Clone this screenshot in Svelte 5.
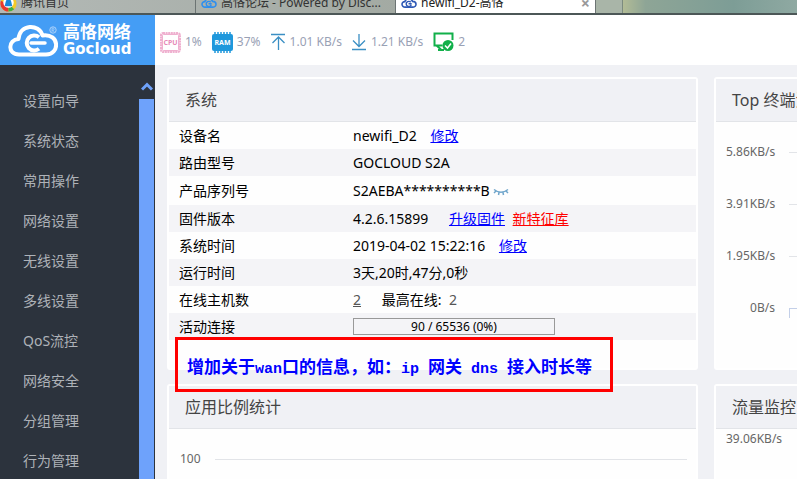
<script lang="ts">
    const menu = [
        "设置向导",
        "系统状态",
        "常用操作",
        "网络设置",
        "无线设置",
        "多线设置",
        "QoS流控",
        "网络安全",
        "分组管理",
        "行为管理",
    ];

    const speedTicks = ["5.86KB/s", "3.91KB/s", "1.95KB/s", "0B/s"];

    const connections = { used: 90, max: 65536 };
    const percent = Math.round((connections.used / connections.max) * 100);
</script>

{#snippet cloud()}
    <svg class="tab-icon" viewBox="0 0 18 12" aria-hidden="true">
        <path
            d="M5 10.6C0 11 0 4.500 4.300 4.500C5.500 .4 11.500 .4 13 4.200C18.200 4.200 18 10.600 13.500 10.600Z"
            fill="none"
            stroke="currentColor"
            stroke-width="1.800"
        />
        <path
            d="M11 5.200A2.900 2.900 0 1 0 11.500 8M8.500 6.800H12"
            fill="none"
            stroke="currentColor"
            stroke-width="1.600"
        />
    </svg>
{/snippet}

<div class="page">
    <div class="tabs">
        <div class="tab first">
            <svg class="qq-icon" viewBox="0 0 18 18" aria-hidden="true">
                <circle cx="9" cy="9" r="8.500" fill="#f3c928" />
                <path d="M1 6a8.500 8.500 0 0 0 8 11.500V10Z" fill="#e8392c" />
                <path d="M9 17.500a8.500 8.500 0 0 0 6-2.500L9 9Z" fill="#3fae49" />
                <circle cx="9" cy="8" r="5.500" fill="#fff" />
                <path d="M9 4c3 0 3 4 4 8H5c1-4 1-8 4-8Z" fill="#1787d8" />
            </svg>
            <span>腾讯首页</span>
        </div>
        <div class="tab forum">
            {@render cloud()}
            <span>高恪论坛 - Powered by Disc...</span>
        </div>
        <div class="tab active">
            {@render cloud()}
            <span>newifi_D2-高恪</span>
            <button class="close" aria-label="关闭">×</button>
        </div>
        <button class="new-tab" aria-label="新标签页"></button>
    </div>

    <div class="body">
        <aside>
            <a class="logo" href="#home">
                <svg viewBox="0 0 50 36" aria-hidden="true">
                    <path
                        d="M11 32.500C-1 32.500 0 17.500 10.500 17C12 1.500 31 1.500 34.500 13.500C52 11 52 32.500 38 32.500Z"
                        fill="none"
                        stroke="#fff"
                        stroke-width="4"
                        stroke-linejoin="round"
                    />
                    <path
                        d="M31 15.200A7.500 7.500 0 1 0 31 26.800"
                        fill="none"
                        stroke="#fff"
                        stroke-width="4"
                    />
                    <path d="M23 21H37" stroke="#fff" stroke-width="3.500" stroke-linecap="round" />
                    <circle cx="45" cy="8" r="3.200" fill="none" stroke="#b5d7fa" stroke-width=".9" />
                    <path
                        d="M44 10V6.200H45.200A1 1 0 0 1 45.200 8.200H44M45 8.200L46.200 10"
                        fill="none"
                        stroke="#b5d7fa"
                        stroke-width=".7"
                    />
                </svg>
                <span class="brand">
                    <span class="brand-cn">高恪网络</span>
                    <span class="brand-en">Gocloud</span>
                </span>
            </a>
            <div class="menu">
                <nav>
                    {#each menu as item}
                        <a href="#menu">{item}</a>
                    {/each}
                </nav>
                <div class="scrollbar">
                    <svg viewBox="0 0 12 10" aria-hidden="true">
                        <path d="M1 8.500L6 3.500L11 8.500" fill="none" stroke="#6ea2fb" stroke-width="3" />
                    </svg>
                    <div class="thumb"></div>
                </div>
            </div>
        </aside>

        <main>
            <header>
                <div class="stat">
                    <svg class="chip" viewBox="0 0 21 21" aria-hidden="true">
                        <rect x="1" y="1" width="19" height="19" rx="2" fill="#fbe6f0" stroke="#efb0cf" stroke-width="2" stroke-dasharray="2 .6" />
                        <rect x="2.500" y="2.500" width="16" height="16" rx="1" fill="#fff" stroke="#efb0cf" />
                        <text x="10.500" y="13" text-anchor="middle" fill="#e78ab8">CPU</text>
                    </svg>
                    <span>1%</span>
                </div>
                <div class="stat">
                    <svg class="chip" viewBox="0 0 21 21" aria-hidden="true">
                        <path
                            d="M3 0V21M6 0V21M9 0V21M12 0V21M15 0V21M18 0V21"
                            stroke="#1f98dc"
                            stroke-width="1.500"
                        />
                        <rect y="2" width="21" height="17" rx="2" fill="#1f98dc" />
                        <text x="10.500" y="13" text-anchor="middle" fill="#fff">RAM</text>
                    </svg>
                    <span>37%</span>
                </div>
                <div class="stat">
                    <svg class="arrow" viewBox="0 0 15 18" aria-hidden="true">
                        <path d="M0 1.500H14M7.500 17V4M1.500 10L7.500 4L13.500 10" />
                    </svg>
                    <span>1.01 KB/s</span>
                </div>
                <div class="stat">
                    <svg class="arrow" viewBox="0 0 15 18" aria-hidden="true">
                        <path d="M0 16.500H14M7 1V13M1 7.500L7 13.500L13 7.500" />
                    </svg>
                    <span>1.21 KB/s</span>
                </div>
                <div class="stat">
                    <svg class="host" viewBox="0 0 21 20" aria-hidden="true">
                        <path
                            d="M9.500 13.500H1.500V1.500H19.500V8M3.500 13.500L8 17.500M5 18H11"
                            fill="none"
                            stroke="#12b04a"
                            stroke-width="2"
                        />
                        <circle cx="15" cy="13.500" r="5.500" fill="#12b04a" />
                        <path d="M12 13.500L14.500 16L18 11.500" fill="none" stroke="#fff" stroke-width="1.500" />
                    </svg>
                    <span>2</span>
                </div>
            </header>

            <div class="grid">
                <section class="card system">
                    <h2>系统</h2>
                    <table>
                        <tbody>
                            <tr>
                                <th>设备名</th>
                                <td>newifi_D2 <a class="near" href="#name">修改</a></td>
                            </tr>
                            <tr>
                                <th>路由型号</th>
                                <td>GOCLOUD S2A</td>
                            </tr>
                            <tr class="serial">
                                <th>产品序列号</th>
                                <td>
                                    S2AEBA**********B
                                    <button class="eye" aria-label="显示">
                                        <svg viewBox="0 0 16 8" aria-hidden="true">
                                            <path
                                                d="M1 1.500Q8 7 15 1.500M3 3L1 5M6 4.500L5.500 7M10 4.500L10.500 7M13 3L15 5"
                                                fill="none"
                                                stroke="#6fa5cb"
                                                stroke-width="1.500"
                                            />
                                        </svg>
                                    </button>
                                </td>
                            </tr>
                            <tr>
                                <th>固件版本</th>
                                <td>
                                    4.2.6.15899
                                    <a class="far" href="#upgrade">升级固件</a>
                                    <a class="red" href="#feature">新特征库</a>
                                </td>
                            </tr>
                            <tr>
                                <th>系统时间</th>
                                <td>2019-04-02 15:22:16 <a class="near" href="#time">修改</a></td>
                            </tr>
                            <tr>
                                <th>运行时间</th>
                                <td>3天,20时,47分,0秒</td>
                            </tr>
                            <tr>
                                <th>在线主机数</th>
                                <td>
                                    <a class="count" href="#hosts">2</a>
                                    <span class="far">最高在线:</span>
                                    <span class="muted">2</span>
                                </td>
                            </tr>
                            <tr>
                                <th>活动连接</th>
                                <td>
                                    <div class="meter">
                                        {connections.used} / {connections.max} ({percent}%)
                                    </div>
                                </td>
                            </tr>
                        </tbody>
                    </table>
                    <p class="note">
                        增加关于<span>wan</span>口的信息，如：<span>{"ip "}</span>网关<span>{" dns "}</span>接入时长等
                    </p>
                </section>

                <section class="card">
                    <h2>Top 终端流量</h2>
                    <div class="chart top">
                        {#each speedTicks as tick}
                            <div class="tick"><span>{tick}</span><i></i></div>
                        {/each}
                    </div>
                </section>

                <section class="card">
                    <h2>应用比例统计</h2>
                    <div class="chart apps">
                        <div class="tick"><span>100</span><i></i></div>
                    </div>
                </section>

                <section class="card">
                    <h2>流量监控</h2>
                    <div class="chart flow">39.06KB/s</div>
                </section>
            </div>
        </main>
    </div>
</div>

<style>
    :global(body) {
        margin: 0;
        background: #f0f1f5;
    }

    .page {
        display: flex;
        flex-direction: column;
        height: 100vh;
        overflow: hidden;
        color: #000;
        font: 14px/20px "Noto Sans", "Noto Sans CJK SC", sans-serif;
    }

    button {
        padding: 0;
        border: 0;
        background: none;
    }

    /* browser tabs */
    .tabs {
        display: flex;
        flex: none;
        align-items: flex-end;
        height: 13px;
        overflow: hidden;
        border-bottom: 2px solid #4c5757;
        background: linear-gradient(90deg, #b3b9b6, #a3aaa3 50%, #b4bd96 78%, #8ea596 81%, #7d9d96 92%, #8fa9a2);
    }

    .tab {
        box-sizing: border-box;
        display: flex;
        flex: 0 0 200px;
        align-items: center;
        gap: 4px;
        min-width: 0;
        height: 20px;
        padding-left: 5px;
        border-right: 1px solid #6c7473;
        color: #333;
        font-size: 12px;
        white-space: nowrap;
    }

    .tab.first {
        flex-basis: 196px;
        padding-left: 0;
    }

    .tab.active {
        background: #fff;
        color: #222;
    }

    .tab-icon {
        flex: none;
        width: 16px;
        height: 12px;
        color: #2f59b5;
    }

    .forum .tab-icon {
        color: #2f8fee;
    }

    .qq-icon {
        width: 17px;
        height: 17px;
    }

    .close {
        margin: 0 5px 0 auto;
        color: #999;
        font: bold 16px/16px "Noto Sans", sans-serif;
    }

    .new-tab {
        width: 27px;
        height: 20px;
        border-right: 1px solid #7c8b7f;
        background: #a9b5a8;
    }

    .body {
        display: flex;
        flex: 1;
        min-height: 0;
    }

    /* sidebar */
    aside {
        display: flex;
        flex: 0 0 155px;
        flex-direction: column;
        background: #2c333d;
    }

    .logo {
        display: flex;
        flex: none;
        align-items: center;
        gap: 5px;
        height: 50px;
        padding-left: 8px;
        background: #449df5;
        color: #fff;
        text-decoration: none;
    }

    .logo svg {
        width: 50px;
        height: 36px;
    }

    .brand {
        display: flex;
        flex-direction: column;
        font-weight: bold;
    }

    .brand-cn {
        font-size: 17px;
        line-height: 18px;
    }

    .brand-en {
        font-family: "DejaVu Sans", sans-serif;
        font-size: 15px;
        line-height: 16px;
    }

    .menu {
        display: flex;
        flex: 1;
        min-height: 0;
    }

    nav {
        flex: 1;
        padding-top: 16px;
        overflow: hidden;
    }

    nav a {
        display: block;
        padding-left: 23px;
        color: #aeb2b8;
        line-height: 40px;
        text-decoration: none;
    }

    .scrollbar {
        display: flex;
        flex-direction: column;
        align-items: center;
        width: 15px;
        margin-right: 1px;
        padding-top: 16px;
    }

    .scrollbar svg {
        flex: none;
        width: 12px;
        height: 10px;
        margin-bottom: 8px;
    }

    .thumb {
        flex: 1;
        width: 100%;
        background: #6ea2fb;
    }

    /* status bar */
    main {
        flex: 1;
        min-width: 0;
        overflow: hidden;
    }

    header {
        box-sizing: border-box;
        display: flex;
        align-items: center;
        gap: 10px;
        height: 50px;
        padding: 4px 5px 0;
        background: #fff;
        color: #99a1b5;
        font-size: 12px;
    }

    .stat {
        display: flex;
        align-items: center;
        gap: 4px;
        white-space: nowrap;
    }

    .chip {
        width: 21px;
        height: 21px;
    }

    .chip text {
        font: bold 7px "Noto Sans", sans-serif;
    }

    .arrow {
        width: 15px;
        height: 18px;
        fill: none;
        stroke: #3b8fc4;
        stroke-width: 1.3;
    }

    .host {
        width: 21px;
        height: 20px;
    }

    /* cards */
    .grid {
        display: grid;
        grid-template-columns: repeat(2, minmax(531px, 1fr));
        gap: 14px 16px;
        padding: 12px;
    }

    .card {
        position: relative;
        border: 2px solid #fff;
        border-radius: 3px;
        background: #fefefe;
    }

    h2 {
        margin: 0;
        padding-left: 16px;
        border-bottom: 1px solid #e2e4e8;
        background: #f0f1f5;
        color: #444;
        font-size: 16px;
        font-weight: normal;
        line-height: 42px;
    }

    .system {
        padding-bottom: 28px;
    }

    table {
        width: 100%;
        border-collapse: collapse;
        table-layout: fixed;
    }

    tr {
        height: 27px;
    }

    tr:nth-child(even) {
        background: #f4f4f7;
    }

    .serial {
        height: 29px;
    }

    th {
        width: 174px;
        padding: 0 0 0 10px;
        font-weight: normal;
        text-align: left;
    }

    td {
        padding: 0;
    }

    td a {
        color: #00f;
    }

    .near {
        margin-left: 10px;
    }

    .far {
        margin-left: 17px;
    }

    .red {
        margin-left: 4px;
        color: #f00;
    }

    .count,
    .muted {
        color: #555;
    }

    .muted {
        margin-left: 4px;
    }

    .eye svg {
        display: block;
        width: 16px;
        height: 8px;
    }

    .meter {
        width: 200px;
        border: 1px solid #999;
        font-size: 12px;
        line-height: 15px;
        text-align: center;
    }

    /* remark laid over the lower edge of the card */
    .note {
        position: absolute;
        top: 258px;
        left: 6px;
        z-index: 1;
        width: 423px;
        margin: 0;
        padding: 14px 0 11px 9px;
        border: 3px solid #f00;
        color: #00f;
        font: bold 17px/24px "Noto Sans CJK SC", sans-serif;
        white-space: nowrap;
    }

    .note span {
        font-family: "Liberation Mono", monospace;
        font-size: 15px;
        line-height: 16px;
        white-space: pre;
    }

    /* charts */
    .chart {
        color: #666;
        font-size: 12px;
    }

    .tick {
        display: flex;
        align-items: center;
        gap: 14px;
    }

    .tick i {
        flex: 1;
        height: 1px;
        background: #e2e4e8;
    }

    .top {
        padding: 4px 9px 0 10px;
    }

    .top .tick {
        height: 52px;
    }

    .top .tick span {
        width: 49px;
        text-align: right;
    }

    .top .tick:last-child i {
        height: 9px;
        margin-top: 9px;
        border: 1px solid #c3cfe8;
        border-width: 1px 0 0 1px;
        background: none;
    }

    .apps {
        padding: 20px 9px 20px 11px;
    }

    .flow {
        padding-left: 10px;
    }
</style>
